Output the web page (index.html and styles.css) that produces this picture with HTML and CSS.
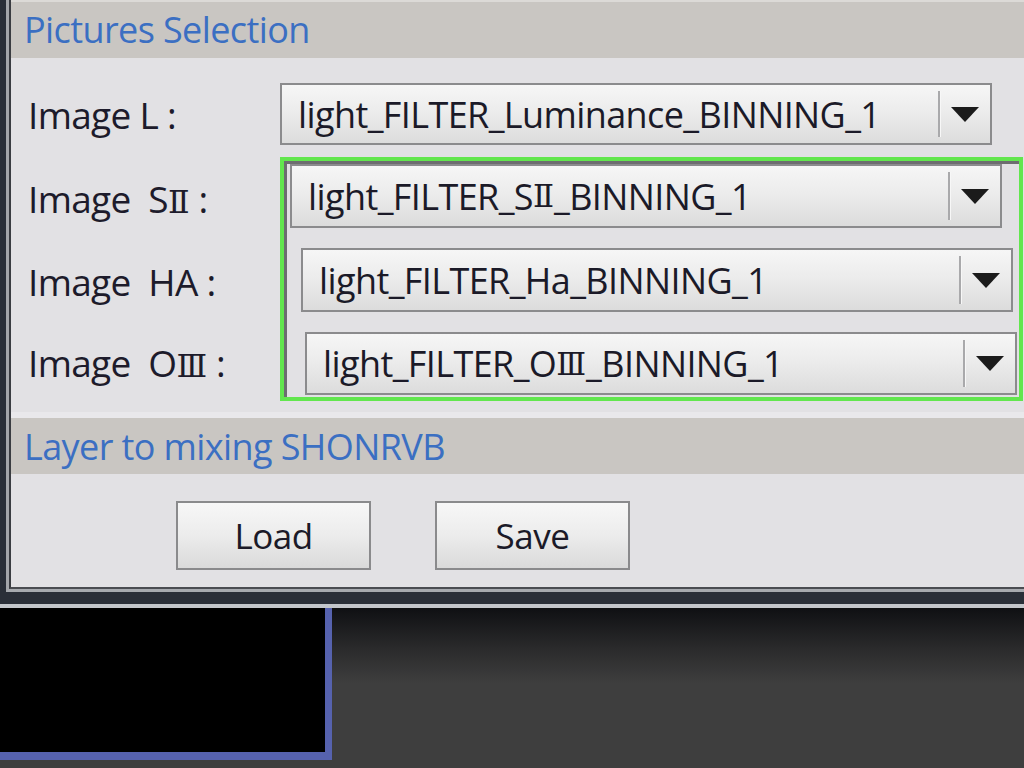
FILE: index.html
```html
<!DOCTYPE html>
<html lang="en">
<head>
<meta charset="utf-8">
<title>Pictures Selection</title>
<link rel="stylesheet" href="styles.css">
</head>
<body>
<div class="screen">
  <div class="frame">
    <div class="dialog-outer">
      <div class="dialog">
        <div class="section-head">Pictures Selection</div>

        <div class="form">
          <div class="label row1">Image L :</div>
          <div class="combo combo-l">
            <span class="combo-text">light_FILTER_Luminance_BINNING_1</span>
            <span class="combo-sep"></span>
            <span class="combo-btn"><svg width="28" height="15" viewBox="0 0 28 15"><polygon points="0,0 28,0 14,15" fill="#1b1b1b"/></svg></span>
          </div>

          <div class="label row2">Image&nbsp; S<span class="rn">Ⅱ</span> :</div>
          <div class="label row3">Image&nbsp; HA :</div>
          <div class="label row4">Image&nbsp; O<span class="rn">Ⅲ</span> :</div>

          <div class="highlight">
            <div class="combo combo-s">
              <span class="combo-text">light_FILTER_S<span class="rn">Ⅱ</span>_BINNING_1</span>
              <span class="combo-sep"></span>
              <span class="combo-btn"><svg width="28" height="15" viewBox="0 0 28 15"><polygon points="0,0 28,0 14,15" fill="#1b1b1b"/></svg></span>
            </div>
            <div class="combo combo-h">
              <span class="combo-text">light_FILTER_Ha_BINNING_1</span>
              <span class="combo-sep"></span>
              <span class="combo-btn"><svg width="28" height="15" viewBox="0 0 28 15"><polygon points="0,0 28,0 14,15" fill="#1b1b1b"/></svg></span>
            </div>
            <div class="combo combo-o">
              <span class="combo-text">light_FILTER_O<span class="rn">Ⅲ</span>_BINNING_1</span>
              <span class="combo-sep"></span>
              <span class="combo-btn"><svg width="28" height="15" viewBox="0 0 28 15"><polygon points="0,0 28,0 14,15" fill="#1b1b1b"/></svg></span>
            </div>
          </div>
        </div>

        <div class="section-head section-head-2">Layer to mixing SHONRVB</div>

        <div class="buttons">
          <button class="btn" type="button">Load</button>
          <button class="btn" type="button">Save</button>
        </div>
      </div>
    </div>
  </div>

  <div class="lower">
    <div class="viewport"></div>
  </div>
</div>
</body>
</html>
```

FILE: styles.css
```css
* {
  box-sizing: border-box;
}

html, body {
  margin: 0;
  padding: 0;
  width: 1024px;
  height: 768px;
  overflow: hidden;
  background: #3d3d3d;
  font-family: "Open Sans", "DejaVu Sans", sans-serif;
}

.screen {
  width: 1024px;
  height: 768px;
  display: flex;
  flex-direction: column;
  overflow: hidden;
}

/* dark window frame around the dialog */
.frame {
  height: 608px;
  flex: none;
  background: #2a2f38;
  padding-left: 6px;
  padding-bottom: 12px;
  border-bottom: 4px solid #c3c6cb;
  display: flex;
}

.dialog-outer {
  flex: 1;
  border-left: 3px solid #a4a6aa;
  border-bottom: 3px solid #a7aaaf;
  display: flex;
}

.dialog {
  flex: 1;
  background: #e2e1e4;
  border-left: 2px solid #3a3c41;
  border-bottom: 2px solid #4a4c51;
  display: flex;
  flex-direction: column;
  overflow: hidden;
}

.section-head {
  height: 58px;
  flex: none;
  background: #c9c6c2;
  border-top: 2px solid #dcdad7;
  color: #3b6fc2;
  font-size: 36px;
  font-weight: 500;
  letter-spacing: -0.6px;
  padding-left: 13px;
  padding-bottom: 2px;
  display: flex;
  align-items: center;
  white-space: nowrap;
}

.section-head-2 {
  height: 56px;
  margin-top: 17px;
  border-top: none;
  padding-bottom: 0;
  box-shadow: 0 -6px 0 #e9e8eb;
}

.rn {
  font-family: "DejaVu Serif", "DejaVu Sans", serif;
  font-size: 0.86em;
  font-weight: 400;
  letter-spacing: 0;
}

/* form grid */
.form {
  margin-top: 25px;
  padding-left: 17px;
  display: grid;
  grid-template-columns: 252px 743px;
  grid-template-rows: 62px 95px 83px 78px;
}

.label {
  color: #1d1b2b;
  font-size: 37px;
  font-weight: 500;
  letter-spacing: -0.7px;
  white-space: nowrap;
  align-self: center;
  grid-column: 1;
}

.row1 { grid-row: 1; }
.row2 { grid-row: 2; margin-top: 12px; }
.row3 { grid-row: 3; }
.row4 { grid-row: 4; }

.combo {
  display: flex;
  align-items: stretch;
  border: 2px solid #8b8b8d;
  background: linear-gradient(#f6f6f6 0%, #ececec 45%, #dcdcdc 100%);
  color: #1b1a28;
  font-size: 36px;
  font-weight: 500;
  letter-spacing: -0.6px;
  white-space: nowrap;
}

.combo-l {
  grid-column: 2;
  grid-row: 1;
  width: 712px;
  height: 62px;
}

.combo-text {
  flex: 1;
  padding-left: 16px;
  display: flex;
  align-items: center;
}

.combo-sep {
  width: 2px;
  margin: 6px 0;
  background: #a9a9ab;
  box-shadow: 1px 0 0 #f7f7f7;
}

.combo-btn {
  width: 50px;
  display: flex;
  align-items: center;
  justify-content: center;
}

/* green highlight around the three narrow-band selectors */
.highlight {
  grid-column: 2;
  grid-row: 2 / span 3;
  margin-top: 12px;
  border: 4px solid #62e64e;
  box-shadow: inset 3px 3px 0 #6d6d70;
  padding-top: 3px;
  display: flex;
  flex-direction: column;
  gap: 20px;
}

.combo-s,
.combo-h,
.combo-o {
  width: 712px;
  height: 64px;
}

.combo-s { margin-left: 6px; }
.combo-h { margin-left: 17px; }
.combo-o { margin-left: 21px; height: 63px; }

/* buttons */
.buttons {
  margin-top: 27px;
  padding-left: 165px;
  display: flex;
  gap: 64px;
}

.btn {
  width: 195px;
  height: 69px;
  border: 2px solid #8a8a8c;
  background: linear-gradient(#f7f7f7 0%, #ececec 50%, #dadada 100%);
  color: #1b1a28;
  font-family: "Open Sans", "DejaVu Sans", sans-serif;
  font-size: 35px;
  font-weight: 500;
  letter-spacing: -0.5px;
  padding: 0;
}

/* lower part of the desktop */
.lower {
  flex: 1;
  background: linear-gradient(#0f1013 0px, #2a2a2b 40px, #3e3e3e 75px, #3e3e3e 100%);
}

.viewport {
  width: 332px;
  height: 152px;
  background: #000;
  border-right: 7px solid #5662ae;
  border-bottom: 8px solid #5662ae;
}
```
